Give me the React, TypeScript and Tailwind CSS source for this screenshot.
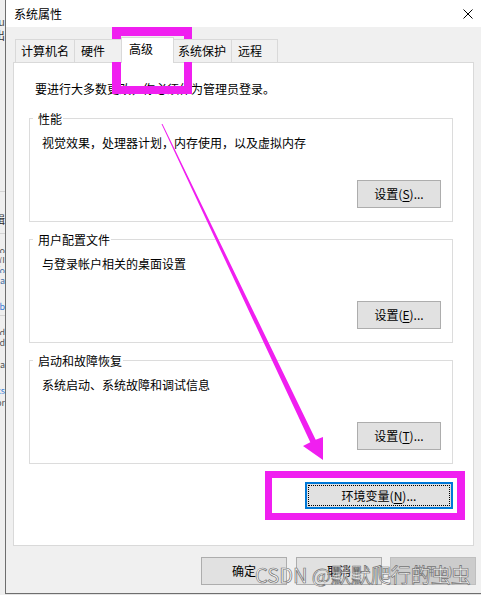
import React from "react";

function Btn({ label, u, rest, w = "w-[84px]", disabled = false }: { label: string; u?: string; rest?: string; w?: string; disabled?: boolean }) {
  return (
    <div
      className={`${w} h-[28px] flex items-center justify-center border ${
        disabled ? "bg-[#cccccc] border-[#bfbfbf] text-[#838383]" : "bg-[#e1e1e1] border-[#adadad] text-black"
      }`}
    >
      <span>
        {label}
        {u ? (
          <>
            (<span className="underline underline-offset-2">{u}</span>)
          </>
        ) : null}
        {rest}
      </span>
    </div>
  );
}

function Group({ title, desc, btn }: { title: string; desc: string; btn: React.ReactNode }) {
  return (
    <div className="relative h-[104px] ml-[15px] mr-[20px] border border-[#dcdcdc] flex flex-col">
      <span className="absolute -top-[8px] left-[3px] pl-[5px] pr-[1px] bg-white">{title}</span>
      <div className="pt-[16px] pl-[12px]">{desc}</div>
      <div className="mt-auto self-end mr-[11px] mb-[13px]">{btn}</div>
    </div>
  );
}

export default function App() {
  return (
    <div className="relative w-[481px] h-[595px] overflow-hidden bg-[#e4e4e4] flex text-[12px] leading-[16px] text-black font-['Noto_Sans_CJK_SC','Noto_Sans',sans-serif]">
      {/* sliver of the window behind */}
      <div className="w-[5px] shrink-0 h-full flex flex-col bg-[#efefef] text-[11px] text-[#555]">
        <div className="h-[13px]" />
        <div className="flex justify-end overflow-hidden whitespace-nowrap h-[14px]"><span>bu</span></div>
        <div className="flex justify-end overflow-hidden whitespace-nowrap h-[16px] text-[#333]"><span>输出</span></div>
        <div className="h-[148px]" />
        <div className="border-t border-[#d4d4d4] h-[20px]" />
        <div className="flex justify-end overflow-hidden whitespace-nowrap h-[22px] text-[#333]"><span>编辑</span></div>
        <div className="border-t border-[#d4d4d4] h-[10px]" />
        <div className="flex justify-end overflow-hidden whitespace-nowrap h-[10px] text-[9px]"><span>Co</span></div>
        <div className="flex justify-end overflow-hidden whitespace-nowrap h-[10px] text-[9px]"><span>(I</span></div>
        <div className="flex justify-end overflow-hidden whitespace-nowrap h-[10px] text-[9px] text-[#4a6fa5]"><span>fo</span></div>
        <div className="flex justify-end overflow-hidden whitespace-nowrap h-[12px] text-[9px] text-[#4a6fa5]"><span>sa</span></div>
        <div className="h-[14px]" />
        <div className="flex justify-end overflow-hidden whitespace-nowrap h-[16px] text-[9px] text-[#3a7bd5]"><span>ab</span></div>
        <div className="border-t border-[#d4d4d4] h-[10px]" />
        <div className="flex justify-end overflow-hidden whitespace-nowrap h-[10px] text-[9px]"><span>od</span></div>
        <div className="flex justify-end overflow-hidden whitespace-nowrap h-[22px] text-[9px]"><span>od</span></div>
        <div className="flex justify-end overflow-hidden whitespace-nowrap h-[26px] text-[9px]"><span>ca</span></div>
        <div className="flex justify-end overflow-hidden whitespace-nowrap h-[12px] text-[9px] text-[#3a7bd5]"><span>xs</span></div>
        <div className="flex justify-end overflow-hidden whitespace-nowrap h-[12px] text-[9px]"><span>pr</span></div>
      </div>

      {/* dialog window */}
      <div className="flex-1 h-[594px] flex flex-col border-l border-b border-[#6e6e6e] bg-[#f0f0f0]">
        {/* title bar */}
        <div className="h-[27px] shrink-0 bg-white flex items-center justify-between pl-[8px] pr-[8px]">
          <span>系统属性</span>
          <svg width="10" height="10" viewBox="0 0 10 10" className="block">
            <path d="M0.5 0.5 L9.5 9.5 M9.5 0.5 L0.5 9.5" stroke="#000" strokeWidth="1" />
          </svg>
        </div>

        {/* tabs */}
        <div className="relative z-10 mt-[10px] h-[25px] flex items-end ml-[9px]">
          <div className="w-[60px] h-[23px] border-l border-t border-r border-[#d9d9d9] bg-[#f0f0f0] pl-[5px] flex items-center">计算机名</div>
          <div className="-ml-px w-[48px] h-[23px] border-l border-t border-r border-[#d9d9d9] bg-[#f0f0f0] pl-[6px] flex items-center">硬件</div>
          <div className="-ml-px w-[53px] h-[26px] -mb-px border-l border-t border-r border-[#d9d9d9] bg-white pl-[7px] pt-[3px]">高级</div>
          <div className="-ml-px w-[59px] h-[23px] border-l border-t border-r border-[#d9d9d9] bg-[#f0f0f0] pl-[4px] flex items-center">系统保护</div>
          <div className="-ml-px w-[47px] h-[23px] border-l border-t border-r border-[#d9d9d9] bg-[#f0f0f0] pl-[6px] flex items-center">远程</div>
        </div>

        {/* panel */}
        <div className="ml-[7px] mr-[7px] h-[484px] border border-[#d9d9d9] bg-white flex flex-col">
          <div className="pt-[18px] pl-[21px]">要进行大多数更改，你必须作为管理员登录。</div>
          <div className="mt-[21px]">
            <Group title="性能" desc="视觉效果，处理器计划，内存使用，以及虚拟内存" btn={<Btn label="设置" u="S" rest="..." />} />
          </div>
          <div className="mt-[17px]">
            <Group title="用户配置文件" desc="与登录帐户相关的桌面设置" btn={<Btn label="设置" u="E" rest="..." />} />
          </div>
          <div className="mt-[17px]">
            <Group title="启动和故障恢复" desc="系统启动、系统故障和调试信息" btn={<Btn label="设置" u="T" rest="..." />} />
          </div>
          <div className="mt-[18px] self-end mr-[20px] w-[148px] h-[27px] border-2 border-[#0078d7] bg-[#e1e1e1] p-px">
            <div className="w-full h-full border border-dotted border-black flex items-center justify-center">
              <span>
                环境变量(<span className="underline underline-offset-2">N</span>)...
              </span>
            </div>
          </div>
        </div>

        {/* bottom buttons */}
        <div className="mt-[11px] flex justify-end pr-[5px]">
          <Btn label="确定" w="w-[86px]" />
          <div className="ml-[9px]">
            <Btn label="取消" w="w-[86px]" />
          </div>
          <div className="ml-[8px]">
            <Btn label="应用" u="A" w="w-[86px]" disabled />
          </div>
        </div>
      </div>

      {/* annotations drawn over the screenshot */}
      <div className="absolute left-[112px] top-[27px] w-[80px] h-[67px] border-l-[9px] border-t-[9px] border-r-[8px] border-b-[8px] border-[#f01ff0] pointer-events-none" />
      <div className="absolute left-[265px] top-[471px] w-[200px] h-[49px] border-l-[7px] border-t-[7px] border-r-[8px] border-b-[7px] border-[#f01ff0] pointer-events-none" />
      <svg className="absolute left-0 top-0 pointer-events-none" width="481" height="595" viewBox="0 0 481 595">
        <polygon points="161.5,124 162.5,124 315.7,439.7 323,437 323,460 303,446 310.3,442.3" fill="#f01ff0" />
      </svg>
      <div className="absolute left-[255px] top-[561px] text-[20px] leading-[28px] whitespace-nowrap text-white/85 [-webkit-text-stroke:0.7px_#707070] pointer-events-none">
        CSDN @默默爬行的虫虫
      </div>
    </div>
  );
}
